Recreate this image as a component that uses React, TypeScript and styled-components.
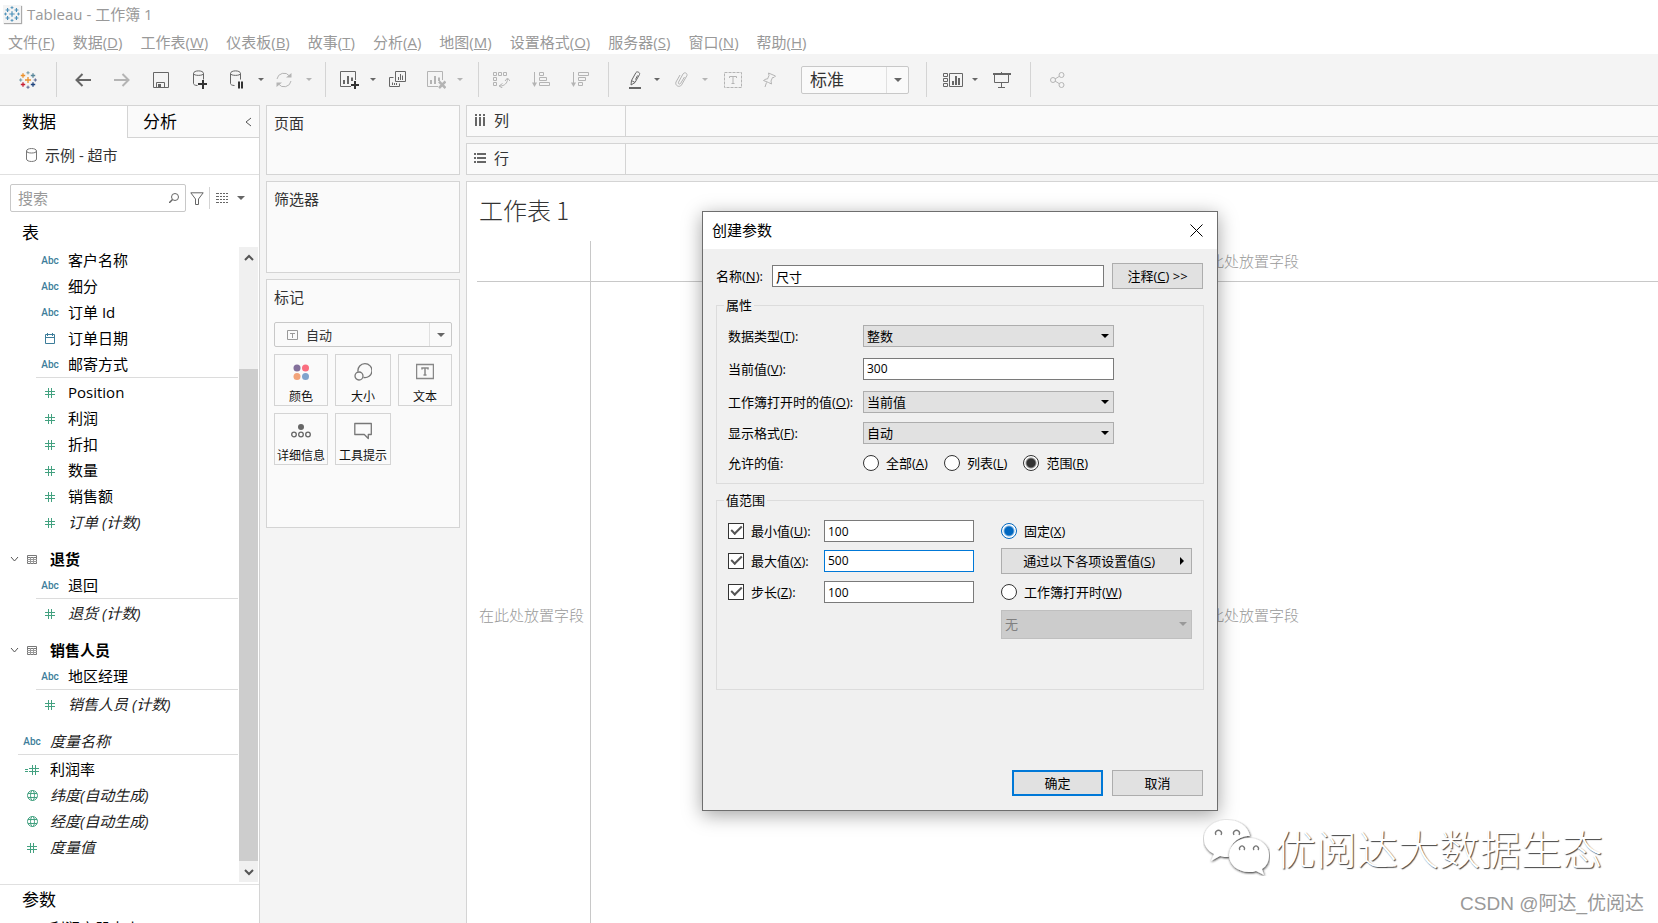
import React from 'react';
import styled, { createGlobalStyle, css } from 'styled-components';

const SANS = '"Open Sans", "Noto Sans", "Noto Sans CJK SC", sans-serif';
const LINE = '#d4d4d4';

const Global = createGlobalStyle`
  *, *::before, *::after { box-sizing: border-box; }
  body { margin: 0; background: #fff; color: #111; font: 15px/20px ${SANS}; }
  button, input, select { font: inherit; color: inherit; margin: 0; }
  svg { display: block; flex: none; }
  h1, h2, ul, fieldset { margin: 0; padding: 0; font-weight: 400; }
`;

const Page = styled.div`
  position: relative;
  display: flex;
  flex-direction: column;
  height: 100vh;
  overflow: hidden;
`;

/* ---------- title, menu and tool bars ---------- */

const TitleBar = styled.header`
  display: flex;
  align-items: center;
  gap: 6px;
  height: 28px;
  padding-left: 3px;
  color: #999;
`;

const AppBadge = styled.span`
  display: grid;
  place-items: center;
  width: 18px;
  height: 18px;
  background: #f4f4f4;
  box-shadow: 1px 1px 1px #aaa;
`;

const MenuBar = styled.nav`
  display: flex;
  align-items: center;
  gap: 18px;
  height: 26px;
  padding: 2px 8px 0;
`;

const MenuItem = styled.button`
  padding: 0;
  border: 0;
  background: none;
  color: #999;
  line-height: 20px;
  white-space: nowrap;
`;

const Toolbar = styled.div`
  display: flex;
  flex: none;
  align-items: center;
  height: 51px;
  padding-left: 18px;
  background: #f4f4f4;
`;

const Tool = styled.button<{ $gap?: number; $off?: boolean }>`
  display: grid;
  place-items: center;
  flex: none;
  min-width: 20px;
  height: 24px;
  margin-left: ${p => p.$gap ?? 0}px;
  padding: 0;
  border: 0;
  background: none;
  color: ${p => (p.$off ? '#b4b4b4' : '#666')};
`;

const Caret = styled.span<{ $gap?: number; $off?: boolean; $big?: boolean }>`
  flex: none;
  width: 0;
  height: 0;
  margin-left: ${p => p.$gap ?? 0}px;
  border: solid transparent;
  border-width: ${p => (p.$big ? '4px 4px 0' : '3px 3px 0')};
  border-top-color: ${p => (p.$off ? '#b4b4b4' : '#666')};
`;

const ToolRule = styled.span<{ $gap: number }>`
  flex: none;
  width: 1px;
  height: 35px;
  margin-left: ${p => p.$gap}px;
  background: ${LINE};
`;

const Drop = styled.div<{ $kind: 'fit' | 'mark' }>`
  display: flex;
  align-items: center;
  flex: none;
  height: ${p => (p.$kind === 'fit' ? 28 : 25)}px;
  width: ${p => (p.$kind === 'fit' ? '108px' : '100%')};
  margin-left: ${p => (p.$kind === 'fit' ? 22 : 0)}px;
  border: 1px solid #c8c8c8;
  border-radius: 2px;
  background: #fafafa;
  color: #333;

  & > select {
    flex: 1;
    min-width: 0;
    height: 100%;
    padding: 0 0 0 8px;
    border: 0;
    background: none;
    appearance: none;
    font-size: ${p => (p.$kind === 'fit' ? 17 : 13)}px;
  }
  & > i {
    display: grid;
    place-items: center;
    width: 22px;
    height: 100%;
    border-left: 1px solid #e0e0e0;
  }
`;

/* ---------- workspace ---------- */

const Work = styled.main`
  display: flex;
  flex: 1;
  min-height: 0;
  background: #f4f4f4;
`;

const Sidebar = styled.aside`
  display: flex;
  flex-direction: column;
  flex: none;
  width: 260px;
  border: solid ${LINE};
  border-width: 1px 1px 0 0;
  background: #fff;
`;

const Tabs = styled.div`
  display: flex;
  flex: none;
  height: 32px;
`;

const Tab = styled.button<{ $active?: boolean }>`
  display: flex;
  align-items: center;
  justify-content: space-between;
  width: ${p => (p.$active ? 127 : 132)}px;
  padding: 0 7px 0 ${p => (p.$active ? 22 : 15)}px;
  border: solid ${LINE};
  border-width: ${p => (p.$active ? '0' : '0 0 1px 1px')};
  background: ${p => (p.$active ? '#fff' : '#fafafa')};
  color: #000;
  font-size: 17px;
`;

const Source = styled.div`
  display: flex;
  align-items: center;
  flex: none;
  gap: 8px;
  height: 37px;
  padding: 0 0 2px 26px;
  border-bottom: 1px solid #e0e0e0;
  color: #333;
`;

const SearchRow = styled.div`
  display: flex;
  align-items: center;
  flex: none;
  padding: 9px 0 0 10px;
  color: #666;
`;

const SearchBox = styled.label`
  display: flex;
  align-items: center;
  width: 176px;
  height: 28px;
  margin-right: 4px;
  padding: 0 6px 0 7px;
  border: 1px solid #c8c8c8;
  border-radius: 2px;

  input {
    flex: 1;
    min-width: 0;
    padding: 0;
    border: 0;
    outline: 0;
    background: none;
  }
  input::placeholder { color: #999; opacity: 1; }
`;

const SearchRule = styled.span`
  width: 1px;
  height: 22px;
  margin: 0 6px 0 5px;
  background: ${LINE};
`;

const SideHeading = styled.h2`
  flex: none;
  padding: 7px 0 0 22px;
  color: #000;
  font-size: 17px;
  line-height: 28px;
`;

const ListArea = styled.div`
  display: flex;
  flex: 1;
  min-height: 0;
  padding: 0 1px 2px 0;
`;

const Fields = styled.ul`
  flex: 1;
  min-width: 0;
  overflow: hidden;
  list-style: none;
`;

const FieldRow = styled.li<{ $level?: number; $italic?: boolean; $line?: boolean; $head?: boolean; $space?: boolean }>`
  display: flex;
  align-items: center;
  height: ${p => (p.$line ? 28 : 26)}px;
  margin: ${p => (p.$space ? 11 : 0)}px 1px 0 ${p => (p.$level === 0 ? 18 : 36)}px;
  padding-left: 4px;
  color: #000;
  white-space: nowrap;
  ${p => p.$line && css`
    border-top: 1px solid #dcdcdc;
    padding-top: 1px;
  `}
  ${p => p.$italic && css`font-style: italic; color: #222;`}
  ${p => p.$head && css`
    gap: 3px;
    margin-left: 10px;
    padding-left: 0;
    font-weight: 700;
  `}
`;

const FieldIcon = styled.span`
  display: grid;
  place-items: center;
  width: 20px;
  margin-right: 8px;
  padding-top: 1px;
  font: 500 10px/14px Roboto, sans-serif;
  font-style: normal;
  color: #3d7d9a;

  ${FieldRow} > svg + & { margin-right: 5px; }
`;

const Scroll = styled.div`
  display: flex;
  flex-direction: column;
  flex: none;
  width: 19px;
  background: #f0f0f0;
  color: #555;
`;

const ScrollArrow = styled.span`
  display: grid;
  place-items: center;
  flex: none;
  height: 21px;
`;

const ScrollTrack = styled.span`
  display: flex;
  flex-direction: column;
  justify-content: flex-end;
  flex: 1;

  &::after { content: ''; height: 83%; background: #cdcdcd; }
`;

const Params = styled.section`
  flex: none;
  height: 39px;
  overflow: hidden;
  border-top: 1px solid #e0e0e0;
  color: #000;

  h2 { padding: 1px 0 2px 22px; font-size: 17px; line-height: 28px; }
  p { margin: 0; padding: 2px 0 0 50px; }
`;

const Cards = styled.div`
  display: flex;
  flex-direction: column;
  flex: none;
  gap: 6px;
  width: 194px;
  margin: 0 6px;
`;

const Card = styled.section<{ $h: number }>`
  height: ${p => p.$h}px;
  padding: 6px 7px;
  border: 1px solid ${LINE};
  background: #fafafa;
  color: #333;

  h2 { font-size: 15px; line-height: 22px; }
`;

const MarkType = styled.div`
  margin-top: 14px;
`;

const MarkTypeIcon = styled.span`
  margin-left: 12px;
`;

const MarkGrid = styled.div`
  display: grid;
  grid-template-columns: 54px 56px 54px;
  justify-content: space-between;
  gap: 7px;
  margin-top: 7px;
`;

const Mark = styled.button`
  display: flex;
  flex-direction: column;
  align-items: center;
  justify-content: space-between;
  height: 52px;
  padding: 8px 0 0;
  border: 1px solid ${LINE};
  background: #fafafa;
  color: #111;
  font-size: 12px;
  line-height: 16px;
  white-space: nowrap;
`;

const Right = styled.div`
  display: flex;
  flex-direction: column;
  flex: 1;
  gap: 6px;
  min-width: 0;
`;

const Shelf = styled.div`
  display: flex;
  flex: none;
  height: 32px;
  border: solid ${LINE};
  border-width: 1px 0 1px 1px;
  background: #fafafa;
  color: #333;
`;

const ShelfName = styled.div`
  display: flex;
  align-items: center;
  gap: 8px;
  width: 159px;
  padding: 0 0 2px 7px;
  border-right: 1px solid ${LINE};

  svg { color: #666; }
`;

const View = styled.section`
  display: flex;
  flex-direction: column;
  flex: 1;
  padding-left: 10px;
  border: solid ${LINE};
  border-width: 1px 0 0 1px;
  background: #fff;

  h1 {
    padding: 0 0 4px 2px;
    color: #333;
    font: 300 24px/55px "Noto Sans CJK SC", sans-serif;
  }
`;

const Canvas = styled.div`
  display: grid;
  grid-template: 41px 1fr / 114px 1fr;
  flex: 1;
  color: #999;
  font: 300 15px/20px "Noto Sans CJK SC", sans-serif;
`;

const SLOT = {
  corner: css`border-width: 0 1px 1px 0;`,
  top: css`border-width: 0 0 1px; justify-content: center; padding-left: 244px;`,
  left: css`border-width: 0 1px 0 0; padding: 24px 0 0 2px;`,
  main: css`border-width: 0; justify-content: center; padding: 24px 0 0 244px;`,
};

const Slot = styled.div<{ $at: keyof typeof SLOT }>`
  display: flex;
  align-items: center;
  border: solid #c8c8c8;
  white-space: nowrap;
  ${p => SLOT[p.$at]}
`;

/* ---------- dialog ---------- */

const Dialog = styled.form`
  position: absolute;
  top: 211px;
  left: 702px;
  width: 516px;
  height: 600px;
  display: flex;
  flex-direction: column;
  border: 1px solid #6e6e6e;
  background: #f0f0f0;
  box-shadow: 0 4px 18px rgba(0, 0, 0, 0.36);
  color: #000;
  font-size: 13px;
  line-height: 16px;
`;

const DialogHead = styled.header`
  display: flex;
  align-items: center;
  justify-content: space-between;
  flex: none;
  height: 37px;
  padding: 0 14px 1px 9px;
  background: #fff;

  h2 { font-size: 15px; line-height: 20px; }
  button { padding: 0; border: 0; background: none; }
`;

const DialogBody = styled.div`
  display: flex;
  flex-direction: column;
  flex: 1;
  padding: 14px 13px;
`;

const NameRow = styled.div`
  display: grid;
  grid-template-columns: 56px 1fr 91px;
  align-items: center;
  flex: none;
  padding-right: 1px;

  input { margin-right: 8px; }
`;

const TextBox = styled.input<{ $focus?: boolean; $number?: boolean }>`
  min-width: 0;
  height: 22px;
  padding: 0 3px;
  border: 1px solid ${p => (p.$focus ? '#0078d7' : '#7a7a7a')};
  border-radius: 0;
  outline: 0;
  background: #fff;
  font-size: ${p => (p.$number ? 12 : 13)}px;
`;

const Push = styled.button<{ $primary?: boolean }>`
  display: flex;
  align-items: center;
  justify-content: center;
  width: 91px;
  height: 26px;
  padding: 0;
  border: ${p => (p.$primary ? '2px solid #0078d7' : '1px solid #adadad')};
  background: #e1e1e1;
  white-space: nowrap;
`;

const SetFrom = styled(Push)`
  justify-content: flex-end;
  gap: 25px;
  width: 100%;
  padding-right: 7px;
`;

const Group = styled.fieldset<{ $h: number }>`
  flex: none;
  min-width: 0;
  height: ${p => p.$h}px;
  margin-top: 8px;
  border: 1px solid #dcdcdc;

  legend { margin-left: 7px; padding: 0 2px; line-height: 16px; }
`;

const PropGrid = styled.div`
  display: grid;
  grid-template: 33px 33px 33px 30px 30px / 135px 251px;
  align-items: center;
  padding: 6px 0 0 11px;
  white-space: nowrap;
`;

const Pick = styled.div<{ $off?: boolean }>`
  display: flex;
  align-items: center;
  width: 100%;
  height: ${p => (p.$off ? 29 : 22)}px;
  padding-right: 4px;
  border: 1px solid ${p => (p.$off ? '#bfbfbf' : '#adadad')};
  background: ${p => (p.$off ? '#ccc' : '#e1e1e1')};

  select {
    flex: 1;
    min-width: 0;
    height: 100%;
    padding: 0 0 0 3px;
    border: 0;
    background: none;
    appearance: none;
    opacity: 1;
    color: ${p => (p.$off ? '#808080' : '#000')};
  }
  span { border-top-color: ${p => (p.$off ? '#999' : '#000')}; }
`;

const Choices = styled.div`
  display: flex;
  gap: 16px;
`;

const Choice = styled.label`
  display: flex;
  align-items: center;
  gap: 7px;
  white-space: nowrap;
`;

const Radio = styled.input.attrs({ type: 'radio' })<{ $tone?: string }>`
  appearance: none;
  width: 16px;
  height: 16px;
  border: 1px solid ${p => p.$tone ?? '#333'};
  border-radius: 50%;
  background: #fff;

  &:checked { background: radial-gradient(circle, ${p => p.$tone ?? '#333'} 4px, #fff 6px); }
`;

const Tick = styled.input.attrs({ type: 'checkbox' })`
  appearance: none;
  display: grid;
  place-items: center;
  width: 16px;
  height: 16px;
  border: 1px solid #333;
  background: #fff;

  &:checked::after {
    content: '';
    width: 11px;
    height: 6px;
    margin-bottom: 4px;
    border: solid #555;
    border-width: 0 0 2px 2px;
    transform: rotate(-45deg);
  }
`;

const RangeGrid = styled.div`
  display: grid;
  grid-template-columns: 96px 150px 191px;
  grid-template-rows: 28px 31px 32px 32px;
  align-items: center;
  padding: 9px 0 0 11px;
`;

const RangeSide = styled.div`
  grid-column: 3;
  width: 191px;
  margin-left: 27px;
`;

const Actions = styled.footer`
  display: flex;
  justify-content: flex-end;
  gap: 9px;
  margin-top: auto;
  padding-right: 1px;
`;

/* ---------- watermarks ---------- */

const Brand = styled.div`
  position: absolute;
  right: 55px;
  bottom: 47px;
  display: flex;
  align-items: center;
  gap: 5px;
  color: #fff;
  font: 300 41px/56px "Noto Sans CJK SC", sans-serif;
  text-shadow: 1px 1px 1px #444;
`;

const Credit = styled.div`
  position: absolute;
  right: 14px;
  bottom: 6px;
  color: #999;
  font: 19px/26px "Liberation Sans", "Noto Sans CJK SC", sans-serif;
`;

/* ---------- drawings ---------- */

const Svg = ({ w, h, children, ...rest }: { w: number; h: number; children: React.ReactNode } & React.SVGProps<SVGSVGElement>) => (
  <svg width={w} height={h} viewBox={`0 0 ${w} ${h}`} fill="none" stroke="currentColor" aria-hidden="true" {...rest}>
    {children}
  </svg>
);

const plus = (x: number, y: number, r: number) => `M${x - r} ${y}h${2 * r}M${x} ${y - r}v${2 * r}`;

const Logo = ({ mono }: { mono?: boolean }) => {
  const c = (v: string) => (mono ? '#4a8fb8' : v);
  return (
    <svg width={mono ? 16 : 18} height={mono ? 16 : 18} viewBox="0 0 18 18" strokeWidth="1.3" aria-hidden="true">
      <path d={plus(9, 9, 3)} stroke={c('#eb912c')} />
      <path d={plus(4, 4.5, 2.2)} stroke={c('#eb912c')} />
      <path d={plus(14, 4.5, 2.2)} stroke={c('#59879b')} />
      <path d={plus(4, 13.5, 2.2)} stroke={c('#c72035')} />
      <path d={plus(14, 13.5, 2.2)} stroke={c('#1f447e')} />
      <path d={plus(9, 1.8, 1.6)} stroke={c('#7099a6')} strokeWidth="1" />
      <path d={plus(9, 16.2, 1.6)} stroke={c('#5b6591')} strokeWidth="1" />
      <path d={plus(1.7, 9, 1.6)} stroke={c('#7099a6')} strokeWidth="1" />
      <path d={plus(16.3, 9, 1.6)} stroke={c('#5b6591')} strokeWidth="1" />
    </svg>
  );
};

const Arrow = ({ back }: { back?: boolean }) => (
  <Svg w={16} h={14} strokeWidth="2">
    {back ? <path d="M16 7H1.5M7.5 1l-6 6 6 6" /> : <path d="M0 7h14.5M8.5 1l6 6-6 6" />}
  </Svg>
);

const Save = () => (
  <Svg w={16} h={16}>
    <path d="M.5 .5h15v15H.5zM3.5 15.500v-5h8v5" />
    <path d="M5 12h3v4H5z" fill="currentColor" stroke="none" />
  </Svg>
);

const Cylinder = ({ kind }: { kind: 'add' | 'pause' }) => (
  <Svg w={16} h={19}>
    <path d="M2.500 3.500c0-3.500 10-3.500 10 0v6M2.500 3.500v10c0 1 1.500 2 4 2M2.500 3.500c0 2.500 10 2.500 10 0" />
    {kind === 'add' ? (
      <path d="M7 14h9M12 10v9" stroke="#333" strokeWidth="2" />
    ) : (
      <path d="M11 11.500v7M14 11.500v7" stroke="#333" strokeWidth="2" />
    )}
  </Svg>
);

const Refresh = () => (
  <Svg w={18} h={16}>
    <path d="M2 7a7 7 0 0 1 12.500-3M16 9a7 7 0 0 1-12.500 3" />
    <path d="M11 5.500h5.500V1zM7 10.500H1.500V15z" fill="currentColor" stroke="none" />
  </Svg>
);

const NewSheet = ({ clear }: { clear?: boolean }) => (
  <Svg w={19} h={18}>
    <path d="M11 15.500H.5V.5h15V9" />
    <path d="M4 9v4M8 5v8M12 6.500V10" strokeWidth="2" />
    {clear ? (
      <path d="M12 10.500l6.500 6.500M18.500 10.500L12 17" strokeWidth="2.500" />
    ) : (
      <path d="M11 14h8M15 10v8" stroke="#333" strokeWidth="2" />
    )}
  </Svg>
);

const Duplicate = () => (
  <Svg w={18} h={17}>
    <path d="M6.500 .5h10v10h-10zM4.500 6.500h-4v9h10v-3" />
    <path d="M9.500 6v3M11.500 3v6M13.500 4.500V9M3.500 11.500V14M5.500 12v2M7.500 12v2" />
  </Svg>
);

const Swap = () => (
  <Svg w={18} h={17}>
    <path d="M1.500 1.500h3v3h-3zM6.500 1.500h3v3h-3zM11.500 1.500h3v3h-3zM1.500 6.500h3v3h-3zM1.500 11.500h3v3h-3z" />
    <path d="M15.500 8c0 4-3 7-7.500 7M13 10l2.500-3L18 10M10.500 12.500L7 15l3.500 2" />
  </Svg>
);

const Sort = ({ down }: { down?: boolean }) => (
  <Svg w={18} h={16}>
    <path d="M2.500 0v13" />
    <path d="M0 10.500h5L2.500 15z" fill="currentColor" stroke="none" />
    {down ? (
      <path d="M7.500 .5h10v3h-10zM7.500 5.500h7v3h-7zM7.500 10.500h4v3h-4z" />
    ) : (
      <path d="M7.500 .5h4v3h-4zM7.500 5.500h7v3h-7zM7.500 10.500h10v3h-10z" />
    )}
  </Svg>
);

const Pen = () => (
  <Svg w={14} h={18}>
    <path d="M3.500 9.500L8 1.500c1-1.500 4.500 0 3.500 2L7 11.500l-4 2.500zM3.500 9.500l3.500 2M7.500 8.500l2-4" />
    <path d="M1 17h12" strokeWidth="2" />
  </Svg>
);

const Clip = () => (
  <Svg w={13} h={16}>
    <path d="M9.500 5l-4 6.500c-1 1.300-2.800 0-2-1.300L8 2c1.500-2.500 5-.7 3.800 1.800L6.500 13C4.500 16-.5 13.500 1 10l4-7" />
  </Svg>
);

const TextFrame = () => (
  <Svg w={18} h={16}>
    <rect x=".5" y=".5" width="17" height="15" strokeDasharray="3 1" />
    <path d="M5.500 6V4.500h7V6M9 4.500v7M7.500 11.500h3" />
  </Svg>
);

const Pin = () => (
  <Svg w={13} h={16}>
    <path d="M5.500 1l7 3-1.500 1.500-1.500 0-1.500 3.500 .5 3-3-1.500-5-2 2.500-1.500 1.500 0 1.500-3.500zM3.500 10.500L2 15" />
  </Svg>
);

const ShowMe = () => (
  <Svg w={20} h={14}>
    <path d="M.5 .5h4v3h-4zM.5 5.500h4v3h-4zM.5 10.500h4v3h-4zM6.500 .5h13v13h-13z" />
    <path d="M10 8v4M13 3v9M16 5v7" strokeWidth="2" />
  </Svg>
);

const Present = () => (
  <Svg w={18} h={16}>
    <path d="M0 2h18" strokeWidth="2" />
    <path d="M1.500 3v7.500h14V3M8.500 0v1M8.500 11v4M5 15.500h7" />
  </Svg>
);

const Share = () => (
  <Svg w={15} h={16}>
    <circle cx="3" cy="8" r="2.500" />
    <circle cx="11.500" cy="3" r="2.500" />
    <circle cx="11.500" cy="13" r="2.500" />
    <path d="M5 7l4-2.500M5 9l4 2.500" />
  </Svg>
);

const Hash = ({ calc }: { calc?: boolean }) => (
  <Svg w={calc ? 14 : 10} h={10} stroke="#43a180" viewBox={calc ? '-4 0 14 10' : '0 0 10 10'}>
    <path d="M0 3.500h10M0 6.500h10M3.500 0v10M6.500 0v10" />
    {calc && <path d="M-4 4.500h3M-4 6.500h3" />}
  </Svg>
);

const Globe = () => (
  <Svg w={11} h={11} stroke="#43a180">
    <circle cx="5.500" cy="5.500" r="5" />
    <ellipse cx="5.500" cy="5.500" rx="2" ry="5" />
    <path d="M1 3.500h9M1 7.500h9" />
  </Svg>
);

const Calendar = () => (
  <Svg w={10} h={11}>
    <path d="M.5 1.500h9v9h-9zM0 4.500h10M2.500 0v3M7.500 0v3" />
  </Svg>
);

const Sheet = () => (
  <Svg w={10} h={9} stroke="#777">
    <path d="M.5 .5h9v8h-9zM0 2.500h10" />
    <path d="M0 4.500h10M0 6.500h10M3.500 2v7M6.500 2v7" stroke="#999" />
  </Svg>
);

const Chevron = ({ d, w = 7, h = 10, width = 1 }: { d: string; w?: number; h?: number; width?: number }) => (
  <Svg w={w} h={h} stroke="#555" strokeWidth={width}><path d={d} /></Svg>
);

const WeChat = () => (
  <svg width="67" height="58" viewBox="0 0 67 58" fill="#fff" aria-hidden="true">
    <defs>
      <filter id="edge" x="-10%" y="-10%" width="120%" height="125%">
        <feDropShadow dx="0.500" dy="1" stdDeviation="0.800" floodColor="#222" />
      </filter>
    </defs>
    <path filter="url(#edge)" d="M24 2C11 2 1 10 1 21c0 7 4 12 10 15l-3 7 9-5c3 1 6 1 9 1 0-13 9-21 21-21C45 8 36 2 24 2z" />
    <path filter="url(#edge)" d="M46 20c-12 0-20 8-20 17s8 17 20 17c3 0 5 0 7-1l8 4-2-6c5-3 7-8 7-14 0-9-8-17-20-17z" />
    <path
      fill="none"
      stroke="#777"
      strokeWidth="1.300"
      d="M13 17a3 3 0 1 1 5 0M31 17a3 3 0 1 1 5 0M37 32a2.500 2.500 0 1 1 4 0M51 32a2.500 2.500 0 1 1 4 0"
    />
  </svg>
);

/* ---------- data ---------- */

type Kind = 'abc' | 'date' | 'num' | 'calc' | 'geo' | 'table';
type Field = { name: string; kind: Kind; level?: number; italic?: boolean; line?: boolean; space?: boolean };

const FIELDS: Field[] = [
  { name: '客户名称', kind: 'abc' },
  { name: '细分', kind: 'abc' },
  { name: '订单 Id', kind: 'abc' },
  { name: '订单日期', kind: 'date' },
  { name: '邮寄方式', kind: 'abc' },
  { name: 'Position', kind: 'num', line: true },
  { name: '利润', kind: 'num' },
  { name: '折扣', kind: 'num' },
  { name: '数量', kind: 'num' },
  { name: '销售额', kind: 'num' },
  { name: '订单 (计数)', kind: 'num', italic: true },
  { name: '退货', kind: 'table', space: true },
  { name: '退回', kind: 'abc' },
  { name: '退货 (计数)', kind: 'num', italic: true, line: true },
  { name: '销售人员', kind: 'table', space: true },
  { name: '地区经理', kind: 'abc' },
  { name: '销售人员 (计数)', kind: 'num', italic: true, line: true },
  { name: '度量名称', kind: 'abc', level: 0, italic: true, space: true },
  { name: '利润率', kind: 'calc', level: 0, line: true },
  { name: '纬度(自动生成)', kind: 'geo', level: 0, italic: true },
  { name: '经度(自动生成)', kind: 'geo', level: 0, italic: true },
  { name: '度量值', kind: 'num', level: 0, italic: true },
];

const MENU: [string, string][] = [
  ['文件', 'F'], ['数据', 'D'], ['工作表', 'W'], ['仪表板', 'B'], ['故事', 'T'], ['分析', 'A'],
  ['地图', 'M'], ['设置格式', 'O'], ['服务器', 'S'], ['窗口', 'N'], ['帮助', 'H'],
];

const ICONS: Record<Kind, React.ReactNode> = {
  abc: 'Abc',
  date: <Calendar />,
  num: <Hash />,
  calc: <Hash calc />,
  geo: <Globe />,
  table: <Sheet />,
};

const MARKS: { name: string; icon: React.ReactNode }[] = [
  {
    name: '颜色',
    icon: (
      <Svg w={18} h={18} stroke="none">
        <circle cx="5" cy="5" r="3.500" fill="#83709b" />
        <circle cx="13.500" cy="5" r="3.500" fill="#fa6e7f" />
        <circle cx="5" cy="13.500" r="3.500" fill="#f2a379" />
        <circle cx="13.500" cy="13.500" r="3.500" fill="#7fa3cc" />
      </Svg>
    ),
  },
  {
    name: '大小',
    icon: (
      <Svg w={18} h={18} stroke="#777" strokeWidth="1.300">
        <path d="M4 8.500a7 7 0 1 1 5.500 6" />
        <circle cx="5" cy="13" r="4" />
      </Svg>
    ),
  },
  {
    name: '文本',
    icon: (
      <Svg w={18} h={18} stroke="#888" strokeWidth="1.500">
        <rect x=".5" y="1.500" width="17" height="14" />
        <path d="M6 6.500V5h6v1.500M9 5v7M7.500 12h3" />
      </Svg>
    ),
  },
  {
    name: '详细信息',
    icon: (
      <Svg w={20} h={18} stroke="#666" strokeWidth="1.300">
        <circle cx="10" cy="5" r="3" fill="#666" stroke="none" />
        <circle cx="3" cy="12.500" r="2.300" />
        <circle cx="10" cy="12.500" r="2.300" />
        <circle cx="17" cy="12.500" r="2.300" />
      </Svg>
    ),
  },
  {
    name: '工具提示',
    icon: (
      <Svg w={18} h={18} stroke="#777" strokeWidth="1.300" strokeLinejoin="round">
        <path d="M.8 1.500h16.500v11h-3v4l-4-4H.8z" />
      </Svg>
    ),
  },
];

const Key = ({ text, k, tail = '' }: { text: string; k: string; tail?: string }) => (
  <span>{text}(<u>{k}</u>){tail}</span>
);

const PickList = ({ id, value, off }: { id: string; value: string; off?: boolean }) => (
  <Pick $off={off}>
    <select id={id} aria-label={off ? '工作簿打开时' : undefined} defaultValue={value} disabled={off}>
      <option>{value}</option>
    </select>
    <Caret $big />
  </Pick>
);

const FieldList = () => (
  <Fields>
    {FIELDS.map(f => (
      <FieldRow key={f.name} $level={f.level} $italic={f.italic} $line={f.line} $space={f.space} $head={f.kind === 'table'}>
        {f.kind === 'table' && <Chevron d="M1 1l3.500 4L8 1" w={9} h={6} />}
        <FieldIcon>{ICONS[f.kind]}</FieldIcon>
        {f.name}
      </FieldRow>
    ))}
  </Fields>
);

const CreateParameter = () => (
  <Dialog onSubmit={e => e.preventDefault()} role="dialog" aria-label="创建参数">
    <DialogHead>
      <h2>创建参数</h2>
      <button type="button" aria-label="关闭">
        <Svg w={13} h={13} stroke="#000"><path d="M.5 .5l12 12M12.500 .5l-12 12" /></Svg>
      </button>
    </DialogHead>
    <DialogBody>
      <NameRow>
        <label htmlFor="name"><Key text="名称" k="N" tail=":" /></label>
        <TextBox id="name" defaultValue="尺寸" />
        <Push type="button"><Key text="注释" k="C" tail=" >>" /></Push>
      </NameRow>
      <Group $h={187}>
        <legend>属性</legend>
        <PropGrid>
          <label htmlFor="type"><Key text="数据类型" k="T" tail=":" /></label>
          <PickList id="type" value="整数" />
          <label htmlFor="current"><Key text="当前值" k="V" tail=":" /></label>
          <TextBox id="current" defaultValue="300" $number />
          <label htmlFor="open"><Key text="工作簿打开时的值" k="O" tail=":" /></label>
          <PickList id="open" value="当前值" />
          <label htmlFor="format"><Key text="显示格式" k="F" tail=":" /></label>
          <PickList id="format" value="自动" />
          <span>允许的值:</span>
          <Choices>
            <Choice><Radio name="allow" /><Key text="全部" k="A" /></Choice>
            <Choice><Radio name="allow" /><Key text="列表" k="L" /></Choice>
            <Choice><Radio name="allow" defaultChecked /><Key text="范围" k="R" /></Choice>
          </Choices>
        </PropGrid>
      </Group>
      <Group $h={198}>
        <legend>值范围</legend>
        <RangeGrid>
          <Choice><Tick defaultChecked /><Key text="最小值" k="U" tail=":" /></Choice>
          <TextBox aria-label="最小值" defaultValue="100" $number />
          <RangeSide><Choice><Radio name="when" $tone="#0067c0" defaultChecked /><Key text="固定" k="X" /></Choice></RangeSide>
          <Choice><Tick defaultChecked /><Key text="最大值" k="X" tail=":" /></Choice>
          <TextBox aria-label="最大值" defaultValue="500" $focus $number />
          <RangeSide>
            <SetFrom type="button">
              <Key text="通过以下各项设置值" k="S" />
              <Svg w={4} h={8} stroke="none"><path d="M0 0l4 4-4 4z" fill="#000" /></Svg>
            </SetFrom>
          </RangeSide>
          <Choice><Tick defaultChecked /><Key text="步长" k="Z" tail=":" /></Choice>
          <TextBox aria-label="步长" defaultValue="100" $number />
          <RangeSide><Choice><Radio name="when" /><Key text="工作簿打开时" k="W" /></Choice></RangeSide>
          <RangeSide><PickList id="none" value="无" off /></RangeSide>
        </RangeGrid>
      </Group>
      <Actions>
        <Push type="submit" $primary>确定</Push>
        <Push type="button">取消</Push>
      </Actions>
    </DialogBody>
  </Dialog>
);

export default function App() {
  return (
    <Page>
      <Global />
      <TitleBar><AppBadge><Logo mono /></AppBadge>Tableau - 工作簿 1</TitleBar>
      <MenuBar>{MENU.map(([t, k]) => <MenuItem key={t}><Key text={t} k={k} /></MenuItem>)}</MenuBar>
      <Toolbar>
        <Tool aria-label="开始"><Logo /></Tool>
        <ToolRule $gap={18} />
        <Tool $gap={16} aria-label="后退"><Arrow back /></Tool>
        <Tool $gap={19} $off aria-label="前进"><Arrow /></Tool>
        <Tool $gap={19} aria-label="保存"><Save /></Tool>
        <Tool $gap={18} aria-label="新建数据源"><Cylinder kind="add" /></Tool>
        <Tool $gap={17} aria-label="暂停更新"><Cylinder kind="pause" /></Tool>
        <Caret $gap={12} />
        <Tool $gap={10} $off aria-label="刷新"><Refresh /></Tool>
        <Caret $gap={12} $off />
        <ToolRule $gap={13} />
        <Tool $gap={13} aria-label="新建工作表"><NewSheet /></Tool>
        <Caret $gap={11} />
        <Tool $gap={12} aria-label="复制"><Duplicate /></Tool>
        <Tool $gap={18} $off aria-label="清除"><NewSheet clear /></Tool>
        <Caret $gap={11} $off />
        <ToolRule $gap={15} />
        <Tool $gap={12} $off aria-label="交换"><Swap /></Tool>
        <Tool $gap={20} $off aria-label="升序"><Sort /></Tool>
        <Tool $gap={19} $off aria-label="降序"><Sort down /></Tool>
        <ToolRule $gap={18} />
        <Tool $gap={16} aria-label="突出显示"><Pen /></Tool>
        <Caret $gap={9} />
        <Tool $gap={11} $off aria-label="附件"><Clip /></Tool>
        <Caret $gap={11} $off />
        <Tool $gap={15} $off aria-label="标签"><TextFrame /></Tool>
        <Tool $gap={16} $off aria-label="固定"><Pin /></Tool>
        <Drop $kind="fit">
          <select aria-label="适合" defaultValue="标准"><option>标准</option></select>
          <i><Caret $big /></i>
        </Drop>
        <ToolRule $gap={17} />
        <Tool $gap={16} aria-label="智能推荐"><ShowMe /></Tool>
        <Caret $gap={9} />
        <Tool $gap={14} aria-label="演示"><Present /></Tool>
        <ToolRule $gap={18} />
        <Tool $gap={16} $off aria-label="共享"><Share /></Tool>
      </Toolbar>
      <Work>
        <Sidebar>
          <Tabs>
            <Tab $active>数据</Tab>
            <Tab>分析<Chevron d="M6 1L1 5l5 4" /></Tab>
          </Tabs>
          <Source>
            <Svg w={11} h={14} stroke="#777"><path d="M.5 3c0-3.300 10-3.300 10 0v8c0 3.300-10 3.300-10 0zM.5 3c0 2.700 10 2.700 10 0" /></Svg>
            示例 - 超市
          </Source>
          <SearchRow>
            <SearchBox>
              <input placeholder="搜索" aria-label="搜索" />
              <Svg w={10} h={10}><circle cx="6" cy="4" r="3.500" /><path d="M3.500 6.500L0 10" strokeWidth="1.500" /></Svg>
            </SearchBox>
            <Svg w={14} h={13}><path d="M.8 .8h12.400L8.500 7v5.500h-3V7z" /></Svg>
            <SearchRule />
            <Svg w={12} h={10}><path d="M0 .5h12M0 3.500h12M0 6.500h12M0 9.500h12" strokeDasharray="3 1 2 1 2 1 2 1" /></Svg>
            <Caret $gap={9} $big />
          </SearchRow>
          <SideHeading>表</SideHeading>
          <ListArea>
            <FieldList />
            <Scroll>
              <ScrollArrow><Chevron d="M1 6l4-4 4 4" w={10} h={8} width={2} /></ScrollArrow>
              <ScrollTrack />
              <ScrollArrow><Chevron d="M1 2l4 4 4-4" w={10} h={8} width={2} /></ScrollArrow>
            </Scroll>
          </ListArea>
          <Params><h2>参数</h2><p>利润容器大小</p></Params>
        </Sidebar>
        <Cards>
          <Card $h={70}><h2>页面</h2></Card>
          <Card $h={92}><h2>筛选器</h2></Card>
          <Card $h={249}>
            <h2>标记</h2>
            <MarkType>
              <Drop $kind="mark">
                <MarkTypeIcon><Svg w={11} h={10} stroke="#999"><path d="M.5 .5h10v9H.5zM3 3.500h5M5.500 3v5" /></Svg></MarkTypeIcon>
                <select aria-label="标记类型" defaultValue="自动"><option>自动</option></select>
                <i><Caret $big /></i>
              </Drop>
            </MarkType>
            <MarkGrid>{MARKS.map(m => <Mark key={m.name}>{m.icon}{m.name}</Mark>)}</MarkGrid>
          </Card>
        </Cards>
        <Right>
          <Shelf><ShelfName><Svg w={12} h={12} strokeWidth="2"><path d="M2 0v2M6 0v2M10 0v2M2 3v9M6 3v9M10 3v9" /></Svg>列</ShelfName></Shelf>
          <Shelf><ShelfName><Svg w={12} h={10} strokeWidth="2"><path d="M0 1h2M0 5h2M0 9h2M3 1h9M3 5h9M3 9h9" /></Svg>行</ShelfName></Shelf>
          <View>
            <h1>工作表 1</h1>
            <Canvas>
              <Slot $at="corner" />
              <Slot $at="top">在此处放置字段</Slot>
              <Slot $at="left">在此处放置字段</Slot>
              <Slot $at="main">在此处放置字段</Slot>
            </Canvas>
          </View>
        </Right>
      </Work>
      <CreateParameter />
      <Brand><WeChat />优阅达大数据生态</Brand>
      <Credit>CSDN @阿达_优阅达</Credit>
    </Page>
  );
}
